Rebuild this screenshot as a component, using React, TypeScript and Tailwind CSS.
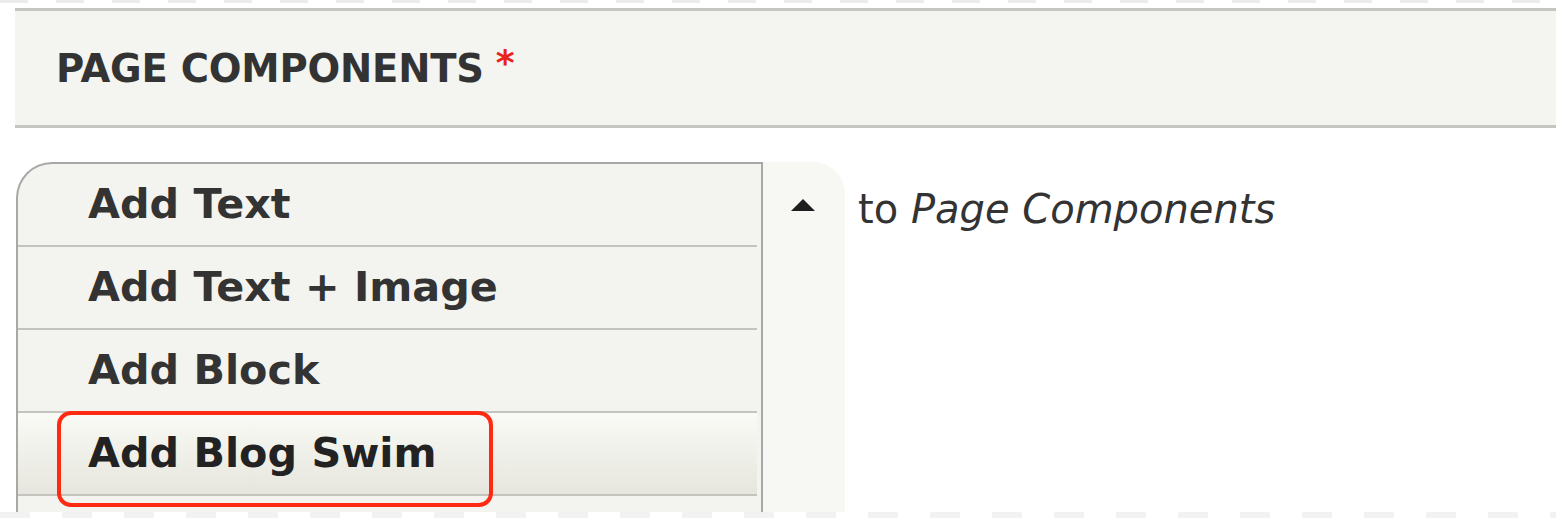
import React from "react";

const rows = ["Add Text", "Add Text + Image", "Add Block", "Add Blog Swim", ""];

export default function App() {
  return (
    <div
      className="relative w-[1556px] h-[518px] overflow-hidden bg-white flex flex-col text-[#333]"
      style={{ fontFamily: '"DejaVu Sans", "Liberation Sans", sans-serif' }}
    >
      <div className="shrink-0 h-[3px] w-full bg-[repeating-linear-gradient(90deg,#ececec_0px,#ececec_28px,#ffffff_28px,#ffffff_56px)]" />
      <div className="shrink-0 mt-[5px] ml-[15px] h-[120px] border-t-[3px] border-b-[3px] border-[#c6c6c0] bg-[#f4f4f0] flex items-center pl-[41px]">
        <span className="text-[38.5px] font-bold tracking-[-0.2px] leading-none mt-[2px]">PAGE COMPONENTS</span>
        <span className="text-[#e8231c] text-[36px] font-bold leading-none ml-[12px] -mt-[10px]">*</span>
      </div>
      <div className="shrink-0 mt-[34px] ml-[16px] flex items-start">
        <div className="w-[747px] border-l-2 border-t-2 border-r-2 border-[#a8a8a6] rounded-tl-[36px] bg-[#f3f3ef] overflow-hidden">
          {rows.map((r, i) => (
            <div
              key={i}
              className={
                "h-[83px] flex items-center pl-[70px] mr-[4px] border-b-2 border-[#c4c4be] " +
                (i === 3 ? "bg-[linear-gradient(#fafaf6,#e6e6de)] text-[#222]" : "")
              }
            >
              <span className="text-[41.3px] font-bold leading-none">{r}</span>
            </div>
          ))}
        </div>
        <div className="w-[82px] h-[400px] bg-[#f7f7f3] rounded-tr-[32px] flex justify-center pt-[36px] pr-[2px]">
          <svg width="26" height="14" viewBox="0 0 26 14">
            <polygon points="13,1 25,13 1,13" fill="#1e1e1e" />
          </svg>
        </div>
        <div className="pl-[13px] pt-[27px] text-[40px] leading-none whitespace-nowrap">
          to <i>Page Components</i>
        </div>
      </div>
      <div className="absolute left-0 bottom-0 h-[6px] w-full bg-[repeating-linear-gradient(90deg,#f2f2f2_0px,#f2f2f2_30px,#ffffff_30px,#ffffff_62px)]" />
      <div className="absolute left-[57px] top-[411px] w-[436px] h-[96px] border-4 border-[#ff2a12] rounded-[14px]" />
    </div>
  );
}
